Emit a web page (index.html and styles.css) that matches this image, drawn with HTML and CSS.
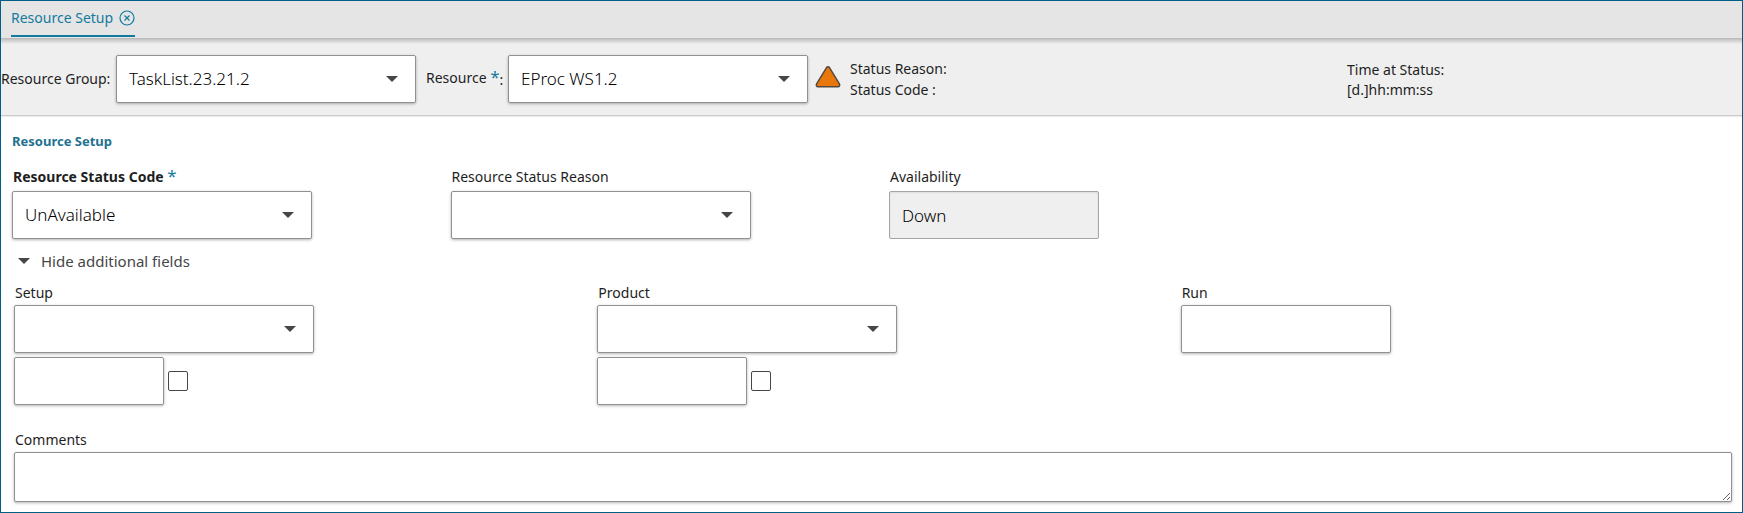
FILE: index.html
```html
<!DOCTYPE html>
<html lang="en">
<head>
<meta charset="utf-8">
<title>Resource Setup</title>
<link rel="stylesheet" href="styles.css">
</head>
<body class="page">
<nav class="tabs">
  <div class="tab">
    <a class="tab-link" href="#setup">Resource Setup</a>
    <button class="tab-close" type="button" aria-label="Close tab">
      <svg class="close-icon" viewBox="0 0 16 16"><circle cx="8" cy="8" r="7"/><path d="M5.5 5.5l5 5M10.5 5.5l-5 5"/></svg>
    </button>
  </div>
</nav>
<header class="header">
  <label class="header-label group-label" for="group">Resource Group:</label>
  <span class="select-box"><select class="control" id="group"><option>TaskList.23.21.2</option></select></span>
  <label class="header-label resource-label" for="resource">Resource <span class="star">*</span><span class="colon">:</span></label>
  <span class="select-box"><select class="control" id="resource"><option>EProc WS1.2</option></select></span>
  <svg class="status-icon" viewBox="0 0 26 22" role="img" aria-label="Warning"><path d="M11.5 1.6Q13 0 14.5 1.6L24.6 18.2Q25 20.5 23 20.7H3Q1 20.5 1.4 18.2Z"/></svg>
  <div class="status"><div>Status Reason:</div><div>Status Code :</div></div>
  <div class="time"><div>Time at Status:</div><div>[d.]hh:mm:ss</div></div>
</header>
<main class="main" id="setup">
  <h1 class="title">Resource Setup</h1>
  <div class="status-grid">
    <div class="field">
      <label class="label label-strong" for="code">Resource Status Code <span class="star">*</span></label>
      <span class="select-box"><select class="control" id="code"><option>UnAvailable</option></select></span>
    </div>
    <div class="field">
      <label class="label" for="reason">Resource Status Reason</label>
      <span class="select-box"><select class="control" id="reason"><option></option></select></span>
    </div>
    <div class="field">
      <label class="label" for="availability">Availability</label>
      <input class="control control-medium control-readonly" id="availability" value="Down" readonly>
    </div>
  </div>
  <button class="toggle" type="button" aria-expanded="true">Hide additional fields</button>
  <section class="extra">
    <div class="extra-grid">
      <div class="field">
        <label class="label label-tight" for="setup-name">Setup</label>
        <span class="select-box"><select class="control" id="setup-name"><option></option></select></span>
        <div class="revision">
          <input class="control control-small" aria-label="Setup revision">
          <input class="check" type="checkbox" aria-label="Use default setup revision">
        </div>
      </div>
      <div class="field">
        <label class="label label-tight" for="product">Product</label>
        <span class="select-box"><select class="control" id="product"><option></option></select></span>
        <div class="revision">
          <input class="control control-small" aria-label="Product revision">
          <input class="check" type="checkbox" aria-label="Use default product revision">
        </div>
      </div>
      <div class="field">
        <label class="label label-tight" for="run">Run</label>
        <input class="control control-medium" id="run">
      </div>
    </div>
    <div class="comments">
      <label class="label label-tight" for="comments">Comments</label>
      <textarea class="control control-area" id="comments"></textarea>
    </div>
  </section>
</main>
</body>
</html>
```
FILE: styles.css
```css
* {
  box-sizing: border-box;
}

.page {
  margin: 0;
  min-height: 100vh;
  border: 1px solid #005f87;
  background: #fff;
  color: #1e1e1e;
  font: 14px/20px "Noto Sans", sans-serif;
}

/* Tab bar */
.tabs {
  display: flex;
  height: 37px;
  padding-left: 10px;
  background: #e5e5e5;
}

.tab {
  display: flex;
  align-items: center;
  gap: 6px;
  height: 36px;
  border-bottom: 2px solid #147a9e;
}

.tab-link {
  color: #147a9e;
  text-decoration: none;
}

.tab-close {
  display: flex;
  padding: 0;
  border: 0;
  background: none;
}

.close-icon {
  width: 16px;
  height: 16px;
  fill: none;
  stroke: #147a9e;
  stroke-width: 1.2;
}

/* Resource header */
.header {
  display: flex;
  align-items: center;
  height: 78px;
  padding-top: 5px;
  border-bottom: 1px solid #cbcbcb;
  background: linear-gradient(#b8b8b8, #efefef 6px);
  box-shadow: 0 1px 1px #eee;
}

.header-label {
  flex: none;
  white-space: nowrap;
}

.group-label {
  width: 115px;
}

.resource-label {
  width: 92px;
  padding-left: 10px;
}

.star {
  color: #147a9e;
  font-size: 17px;
  font-weight: 400;
  line-height: 16px;
}

.colon {
  vertical-align: -2px;
}

.status-icon {
  flex: none;
  width: 26px;
  height: 22px;
  margin: 0 9px 4px 7px;
  fill: #e9780c;
  stroke: #55483f;
  stroke-width: 1.5;
}

.status {
  flex: 1;
  line-height: 21px;
}

.time {
  flex: 0 0 395px;
  padding-top: 2px;
}

/* Controls */
.select-box {
  display: grid;
  flex: none;
  width: 300px;
}

.select-box::after {
  content: "";
  grid-area: 1 / 1;
  place-self: center end;
  margin-right: 18px;
  border: 6px solid transparent;
  border-top-color: #464646;
  border-bottom: 0;
  pointer-events: none;
}

.control {
  grid-area: 1 / 1;
  width: 100%;
  height: 48px;
  margin: 0;
  padding: 0 12px;
  border: 1px solid #919191;
  border-radius: 2px;
  background: #fff;
  box-shadow: 0 1px 3px rgba(0, 0, 0, 0.3);
  color: #000;
  font: 300 17px/24px "Noto Sans", sans-serif;
  appearance: none;
}

.control-small {
  width: 150px;
}

.control-medium {
  width: 210px;
}

.control-readonly {
  border-color: #a5a5a5;
  background: #efefef;
  box-shadow: inset 0 1px 2px #ddd;
}

.control-area {
  display: block;
  height: 50px;
  resize: both;
}

.check {
  width: 20px;
  height: 20px;
  margin: 0;
  border: 1px solid #464646;
  border-radius: 2px;
  background: #fff;
  appearance: none;
}

/* Form */
.main {
  padding: 15px 0 8px 11px;
}

.title {
  margin: 0;
  color: #1f7291;
  font-size: 13px;
  font-weight: 700;
  line-height: 20px;
}

.status-grid {
  display: grid;
  grid-template-columns: repeat(4, 1fr);
  column-gap: 24px;
  padding-top: 16px;
}

.field {
  display: flex;
  flex-direction: column;
}

.label {
  height: 24px;
  padding-left: 1px;
}

.label-strong {
  font-weight: 700;
}

.label-tight {
  display: block;
  height: 22px;
}

.toggle {
  display: flex;
  align-items: center;
  gap: 11px;
  margin: 12px 0 0;
  padding: 0 6px;
  border: 0;
  background: none;
  color: #464646;
  font: 15px/20px "Noto Sans", sans-serif;
}

.toggle::before {
  content: "";
  border: 6px solid transparent;
  border-top-color: #464646;
  border-bottom: 0;
}

.extra {
  padding: 12px 10px 0 2px;
}

.extra-grid {
  display: grid;
  grid-template-columns: repeat(3, 1fr);
  column-gap: 32px;
}

.revision {
  display: flex;
  align-items: center;
  gap: 4px;
  padding-top: 4px;
}

.comments {
  padding-top: 25px;
}
```
